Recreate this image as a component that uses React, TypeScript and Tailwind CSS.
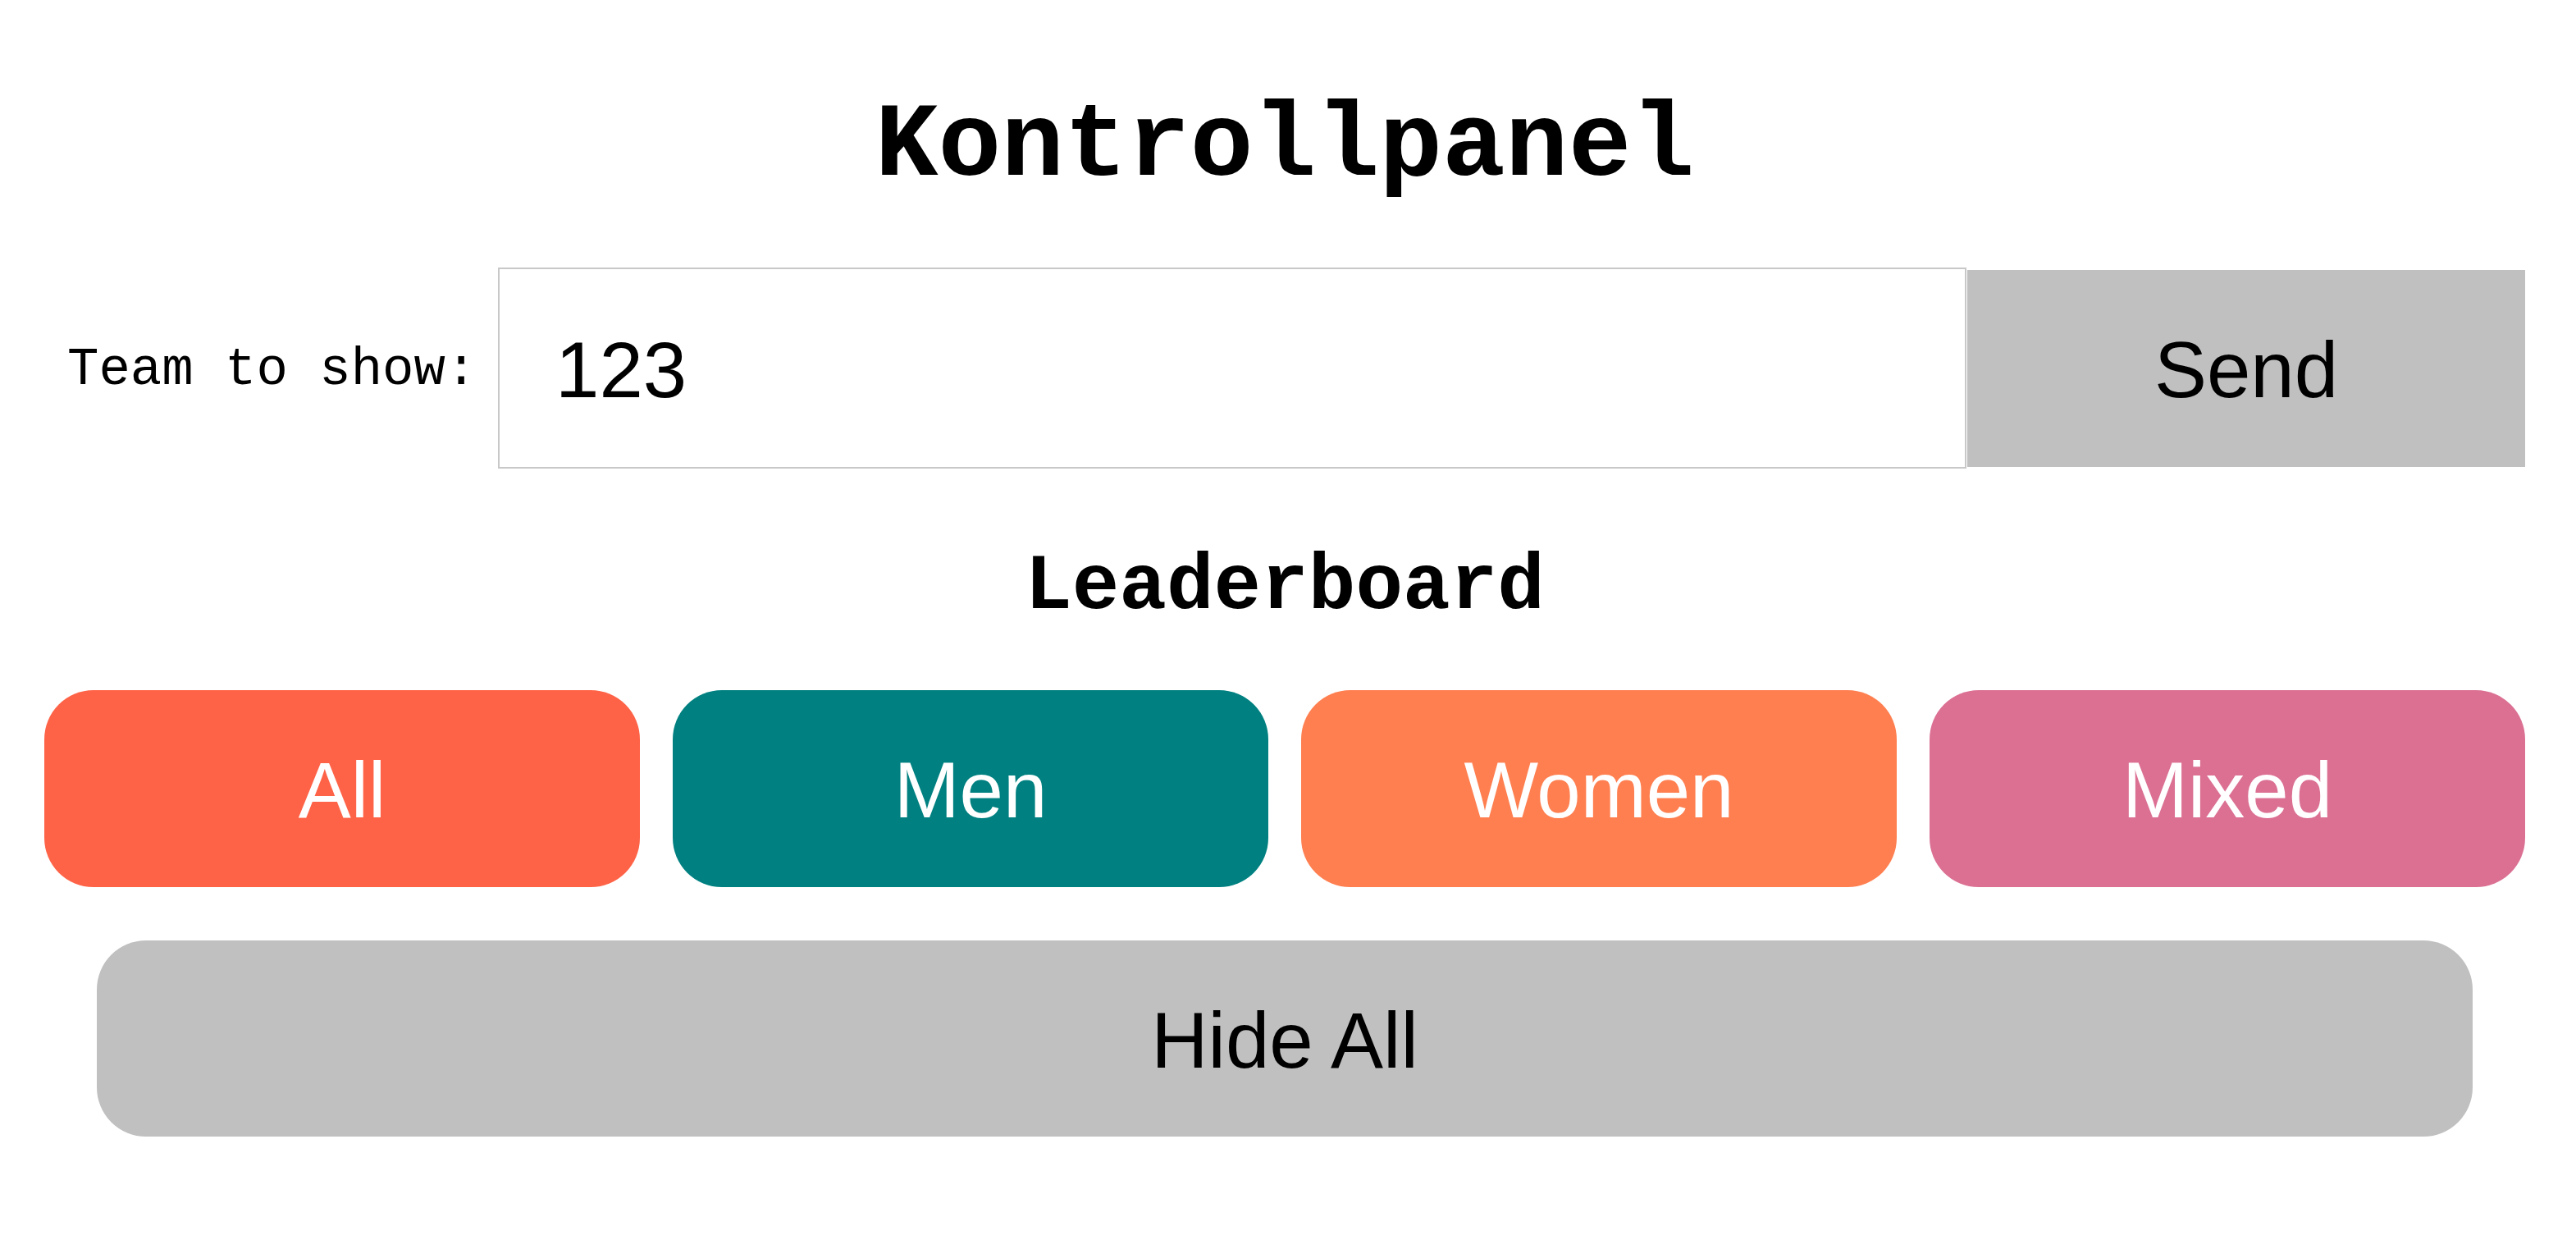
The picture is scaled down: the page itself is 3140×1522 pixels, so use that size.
import React from "react";

export default function App() {
  const mono = "font-['Liberation_Mono','Courier_New',monospace]";
  const sans = "font-['Liberation_Sans',Arial,sans-serif]";
  return (
    <div className="w-[3140px] min-h-[1522px] bg-white text-black">
      <h1 className={`${mono} font-bold text-[128px] leading-none text-center pt-[115px] pl-[54px] pr-[62px]`}>
        Kontrollpanel
      </h1>
      <div className="flex items-center mt-[83px] pl-[82px] pr-[62px]">
        <label className={`${mono} text-[64px] leading-none whitespace-nowrap w-[525px] pt-[4px]`}>
          Team to show:
        </label>
        <input
          defaultValue="123"
          className={`${sans} w-[1790px] h-[245px] border-2 border-[#c8c8c8] bg-white pl-[68px] pt-[4px] text-[96px] outline-none`}
        />
        <button className={`${sans} w-[680px] h-[240px] ml-[1px] bg-[#c0c0c0] text-[96px] leading-none pt-[4px]`}>
          Send
        </button>
      </div>
      <h2 className={`${mono} font-bold text-[96px] leading-none text-center mt-[97px] pl-[54px] pr-[62px]`}>
        Leaderboard
      </h2>
      <div className="grid grid-cols-4 gap-[40px] mt-[77px] pl-[54px] pr-[62px]">
        <button className={`${sans} h-[240px] rounded-[60px] bg-[#ff6347] text-white text-[96px] leading-none pt-[4px]`}>All</button>
        <button className={`${sans} h-[240px] rounded-[60px] bg-[#008080] text-white text-[96px] leading-none pt-[4px]`}>Men</button>
        <button className={`${sans} h-[240px] rounded-[60px] bg-[#ff7f50] text-white text-[96px] leading-none pt-[4px]`}>Women</button>
        <button className={`${sans} h-[240px] rounded-[60px] bg-[#db7093] text-white text-[96px] leading-none pt-[4px]`}>Mixed</button>
      </div>
      <div className="mt-[65px] pl-[118px] pr-[126px]">
        <button className={`${sans} w-full h-[239px] rounded-[60px] bg-[#c0c0c0] text-black text-[96px] leading-none pt-[4px]`}>
          Hide All
        </button>
      </div>
    </div>
  );
}
